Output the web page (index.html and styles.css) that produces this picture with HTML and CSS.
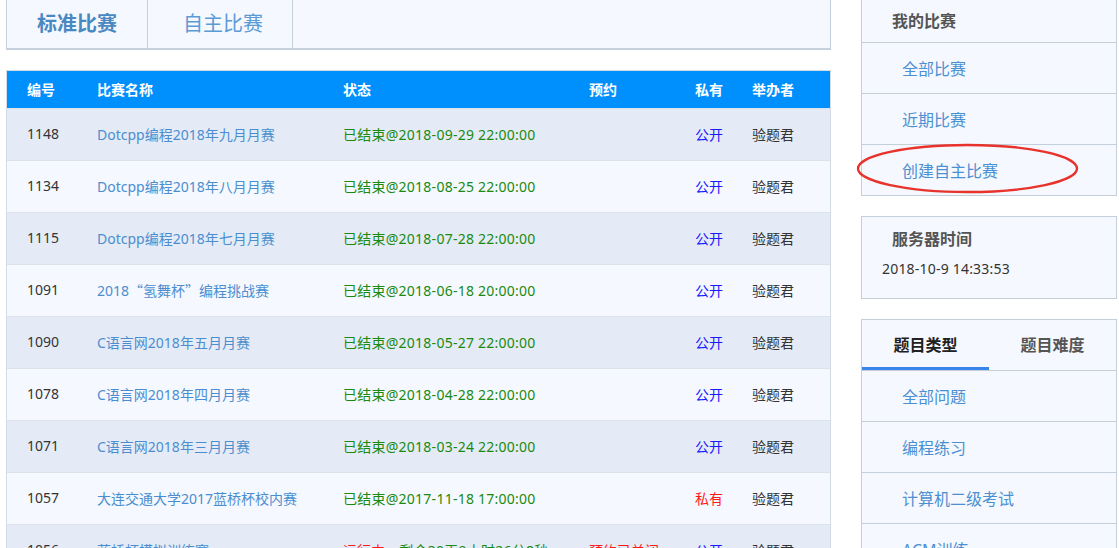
FILE: index.html
```html
<!DOCTYPE html>
<html lang="zh-CN">
<head>
<meta charset="utf-8">
<title>比赛列表</title>
<link rel="stylesheet" href="styles.css">
</head>
<body>
<div class="page">
  <main class="main">
    <nav class="match-tabs">
      <a class="match-tab match-tab--active">标准比赛</a>
      <a class="match-tab">自主比赛</a>
    </nav>
    <table class="contest-table">
      <colgroup>
        <col class="col-id"><col class="col-name"><col class="col-status"><col class="col-book"><col class="col-priv"><col>
      </colgroup>
      <thead>
        <tr><th>编号</th><th>比赛名称</th><th>状态</th><th>预约</th><th>私有</th><th>举办者</th></tr>
      </thead>
      <tbody>
        <tr><td>1148</td><td><a class="c-name">Dotcpp编程2018年九月月赛</a></td><td class="c-done">已结束@2018-09-29 22:00:00</td><td></td><td class="c-pub">公开</td><td>验题君</td></tr>
        <tr><td>1134</td><td><a class="c-name">Dotcpp编程2018年八月月赛</a></td><td class="c-done">已结束@2018-08-25 22:00:00</td><td></td><td class="c-pub">公开</td><td>验题君</td></tr>
        <tr><td>1115</td><td><a class="c-name">Dotcpp编程2018年七月月赛</a></td><td class="c-done">已结束@2018-07-28 22:00:00</td><td></td><td class="c-pub">公开</td><td>验题君</td></tr>
        <tr><td>1091</td><td><a class="c-name">2018<span class="cjk">“氢舞杯”</span>编程挑战赛</a></td><td class="c-done">已结束@2018-06-18 20:00:00</td><td></td><td class="c-pub">公开</td><td>验题君</td></tr>
        <tr><td>1090</td><td><a class="c-name">C语言网2018年五月月赛</a></td><td class="c-done">已结束@2018-05-27 22:00:00</td><td></td><td class="c-pub">公开</td><td>验题君</td></tr>
        <tr><td>1078</td><td><a class="c-name">C语言网2018年四月月赛</a></td><td class="c-done">已结束@2018-04-28 22:00:00</td><td></td><td class="c-pub">公开</td><td>验题君</td></tr>
        <tr><td>1071</td><td><a class="c-name">C语言网2018年三月月赛</a></td><td class="c-done">已结束@2018-03-24 22:00:00</td><td></td><td class="c-pub">公开</td><td>验题君</td></tr>
        <tr><td>1057</td><td><a class="c-name">大连交通大学2017蓝桥杯校内赛</a></td><td class="c-done">已结束@2017-11-18 17:00:00</td><td></td><td class="c-priv">私有</td><td>验题君</td></tr>
        <tr><td>1056</td><td><a class="c-name">蓝桥杯模拟训练赛</a></td><td><span class="c-run">运行中</span><span class="c-done">，剩余30天9小时26分8秒</span></td><td class="c-closed">预约已关闭</td><td class="c-pub">公开</td><td>验题君</td></tr>
      </tbody>
    </table>
  </main>
  <aside class="sidebar">
    <section class="side-box side-box--top">
      <h3 class="side-title">我的比赛</h3>
      <ul class="side-list">
        <li class="side-item"><a>全部比赛</a></li>
        <li class="side-item"><a>近期比赛</a></li>
        <li class="side-item side-item--marked"><a>创建自主比赛</a>
          <svg class="mark-ellipse" width="223" height="51" viewBox="0 0 223 51"><ellipse cx="111.5" cy="25.5" rx="109.5" ry="23.5" fill="none" stroke="#e8322c" stroke-width="2.4"/></svg>
        </li>
      </ul>
    </section>
    <section class="side-box">
      <h3 class="side-title side-title--plain">服务器时间</h3>
      <div class="server-time">2018-10-9 14:33:53</div>
    </section>
    <section class="side-box">
      <div class="side-tabs">
        <a class="side-tab side-tab--active">题目类型</a>
        <a class="side-tab">题目难度</a>
      </div>
      <ul class="side-list">
        <li class="side-item"><a>全部问题</a></li>
        <li class="side-item"><a>编程练习</a></li>
        <li class="side-item"><a>计算机二级考试</a></li>
        <li class="side-item"><a>ACM训练</a></li>
      </ul>
    </section>
  </aside>
</div>
</body>
</html>
```

FILE: styles.css
```css
* { box-sizing: border-box; }
html, body { margin: 0; padding: 0; background: #fff; }
body {
  font-family: "Noto Sans", "Noto Sans CJK SC", sans-serif;
  font-size: 14px;
  color: #333;
  overflow: hidden;
}
a { text-decoration: none; cursor: pointer; }
ul { list-style: none; margin: 0; padding: 0; }
h3 { margin: 0; }
.cjk { font-family: "Noto Sans CJK SC", sans-serif; }

.page {
  display: flex;
  align-items: flex-start;
  gap: 30px;
  padding-left: 6px;
}

.main { width: 825px; flex: none; }

.match-tabs {
  display: flex;
  height: 50px;
  background: #f5f8fe;
  border: 1px solid #c5d2de;
  border-top: none;
  border-bottom-width: 2px;
}
.match-tab {
  padding: 0 30px 0 30px;
  line-height: 48px;
  font-size: 20px;
  color: #5b9bd5;
  border-right: 1px solid #c5d2de;
}
.match-tab + .match-tab { padding: 0 29px 0 35px; }
.match-tab--active { font-weight: bold; color: #4a88c2; }

.contest-table {
  margin-top: 20px;
  width: 825px;
  table-layout: fixed;
  border-collapse: separate;
  border-spacing: 0;
  border: 1px solid #d3dbe4;
}
.col-id { width: 70px; }
.col-name { width: 246px; }
.col-status { width: 246px; }
.col-book { width: 106px; }
.col-priv { width: 57px; }

.contest-table th {
  background: #0090fe;
  color: #fff;
  font-weight: bold;
  font-size: 14px;
  text-align: left;
  height: 37px;
  padding: 0 0 2px 20px;
}
.contest-table td {
  height: 52px;
  padding: 0 0 2px 20px;
  border-top: 1px solid #dce2ea;
  white-space: nowrap;
  overflow: hidden;
}
.contest-table tbody tr:nth-child(odd) td { background: #e4ebf6; }
.contest-table tbody tr:nth-child(even) td { background: #f5f8fe; }

.c-name { color: #4b8ed0; }
.c-done { color: #1a8a10; letter-spacing: 0.25px; }
.c-run { color: #ff1a1a; }
.c-closed { color: #ff1a1a; }
.c-pub { color: #1a1aff; }
.c-priv { color: #ff1a1a; }

.sidebar { width: 256px; flex: none; }

.side-box {
  background: #f5f8fe;
  border: 1px solid #c3d0dc;
  margin-top: 20px;
}
.side-box--top { margin-top: 0; border-top: none; }

.side-title {
  height: 43px;
  line-height: 42px;
  padding-left: 30px;
  font-size: 16px;
  font-weight: bold;
  color: #555;
  border-bottom: 1px solid #c3d0dc;
}
.side-title--plain {
  height: auto;
  line-height: 22px;
  padding-top: 11px;
  border-bottom: none;
}
.server-time {
  padding: 9px 0 19px 20px;
  line-height: 20px;
  font-size: 14px;
  letter-spacing: 0.2px;
  color: #333;
}

.side-item {
  position: relative;
  height: 51px;
  line-height: 52px;
  padding-left: 40px;
  font-size: 16px;
  border-bottom: 1px solid #c3d0dc;
}
.side-item:last-child { border-bottom: none; height: 50px; }
.side-item a { color: #4b90d2; }

.mark-ellipse {
  position: absolute;
  left: -6px;
  top: -2px;
  pointer-events: none;
}

.side-tabs {
  display: flex;
  border-bottom: 1px solid #c3d0dc;
}
.side-tab {
  flex: 1;
  text-align: center;
  padding-top: 3px;
  line-height: 44px;
  font-size: 16px;
  font-weight: bold;
  color: #555;
  border-bottom: 3px solid transparent;
}
.side-tab--active { color: #222; border-bottom-color: #3b84ec; }
```
